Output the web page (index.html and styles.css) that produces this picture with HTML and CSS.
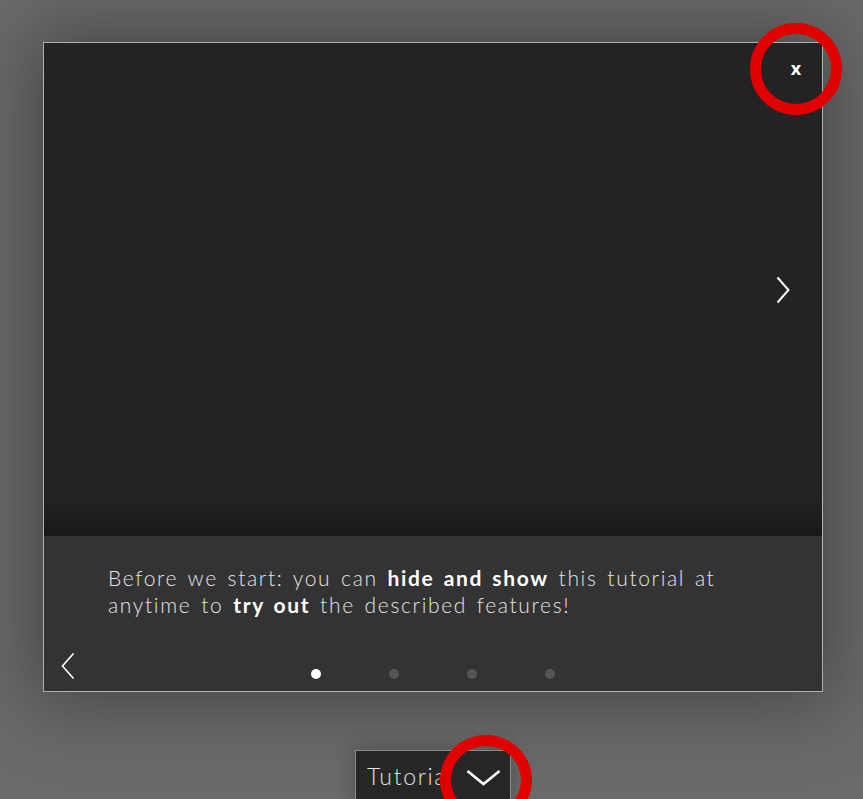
FILE: index.html
```html
<!DOCTYPE html>
<html>
<head>
<meta charset="utf-8">
<link rel="stylesheet" href="styles.css">
</head>
<body>
<div class="stage">
  <div class="modal">
    <div class="media">
      <button class="close">x</button>
      <button class="nav next" aria-label="Next">
        <svg width="14" height="28" viewBox="0 0 14 28"><path d="M1.5 1.5 L12.5 14 L1.5 26.5" fill="none" stroke="#fff" stroke-width="2"/></svg>
      </button>
    </div>
    <div class="caption">
      <p class="text">Before we start: you can <b>hide and show</b> this tutorial at anytime to <b>try out</b> the described features!</p>
      <div class="footer">
        <button class="nav prev" aria-label="Previous">
          <svg width="14" height="28" viewBox="0 0 14 28"><path d="M12.5 1.5 L1.5 14 L12.5 26.5" fill="none" stroke="#fff" stroke-width="1.6"/></svg>
        </button>
        <div class="dots">
          <span class="dot active"></span>
          <span class="dot"></span>
          <span class="dot"></span>
          <span class="dot"></span>
        </div>
      </div>
    </div>
  </div>
  <div class="toggle">
    <span class="toggle-label">Tutorial</span>
    <svg class="chev" width="35" height="18" viewBox="0 0 35 18"><path d="M1.5 2 L17.5 15 L33.5 2" fill="none" stroke="#fff" stroke-width="2.6"/></svg>
  </div>
  <span class="ring ring-close"></span>
  <span class="ring ring-toggle"></span>
</div>
</body>
</html>
```
FILE: styles.css
```css
html, body {
  margin: 0;
  padding: 0;
}
body {
  background: #6a6a6a;
  width: 863px;
  height: 799px;
  overflow: hidden;
  font-family: "Lato", "Noto Sans", sans-serif;
}
.stage {
  position: relative;
  width: 863px;
  height: 799px;
  padding-top: 42px;
  box-sizing: border-box;
}
.modal {
  margin-left: 43px;
  width: 780px;
  height: 650px;
  box-sizing: border-box;
  border: 1px solid #b0b0b0;
  display: flex;
  flex-direction: column;
  box-shadow: 0 0 70px 10px rgba(0, 0, 0, 0.35);
}
.media {
  position: relative;
  height: 493px;
  background: linear-gradient(to bottom, #232323 0, #232323 455px, #181818 493px);
}
.close {
  position: absolute;
  right: 9px;
  top: 11px;
  width: 34px;
  height: 28px;
  background: none;
  border: 0;
  color: #fff;
  font-family: "Noto Sans", sans-serif;
  font-weight: 700;
  font-size: 18px;
  line-height: 28px;
  padding: 0;
}
.nav {
  background: none;
  border: 0;
  padding: 0;
  display: block;
}
.next {
  position: absolute;
  right: 32px;
  top: 233px;
}
.caption {
  flex: 1;
  background: #333333;
  display: flex;
  flex-direction: column;
}
.text {
  margin: 28px 60px 0 64px;
  color: #e4e4e4;
  font-weight: 300;
  font-size: 21px;
  line-height: 27px;
  letter-spacing: 1.65px;
  word-spacing: 2.5px;
}
.text b {
  font-weight: 700;
  color: #fff;
}
.footer {
  margin-top: auto;
  height: 48px;
  display: flex;
  align-items: flex-start;
  position: relative;
}
.prev {
  margin-left: 17px;
  margin-top: 9px;
}
.dots {
  display: flex;
  gap: 68px;
  margin-left: 236px;
  margin-top: 26px;
  align-items: center;
}
.dot {
  width: 10px;
  height: 10px;
  border-radius: 50%;
  background: #555;
}
.dot.active {
  background: #fff;
}
.toggle {
  margin: 58px 0 0 355px;
  width: 156px;
  height: 60px;
  box-sizing: border-box;
  border: 1px solid #8a8a8a;
  border-bottom: 0;
  background: #262626;
  display: flex;
  align-items: flex-start;
  box-shadow: 0 0 20px rgba(0, 0, 0, 0.25);
  overflow: hidden;
}
.toggle-label {
  flex: 1;
  min-width: 0;
  overflow: hidden;
  color: #e2e2e2;
  font-weight: 300;
  font-size: 23px;
  letter-spacing: 1.7px;
  margin: 11px 0 0 11px;
  line-height: 28px;
  white-space: nowrap;
}
.chev {
  margin: 18px 9px 0 0;
  flex-shrink: 0;
}
.ring {
  position: absolute;
  box-sizing: border-box;
  width: 92px;
  height: 92px;
  border: 11px solid #e00000;
  border-radius: 50%;
}
.ring-close {
  left: 750px;
  top: 23px;
}
.ring-toggle {
  left: 440px;
  top: 735px;
  height: 90px;
}
```
